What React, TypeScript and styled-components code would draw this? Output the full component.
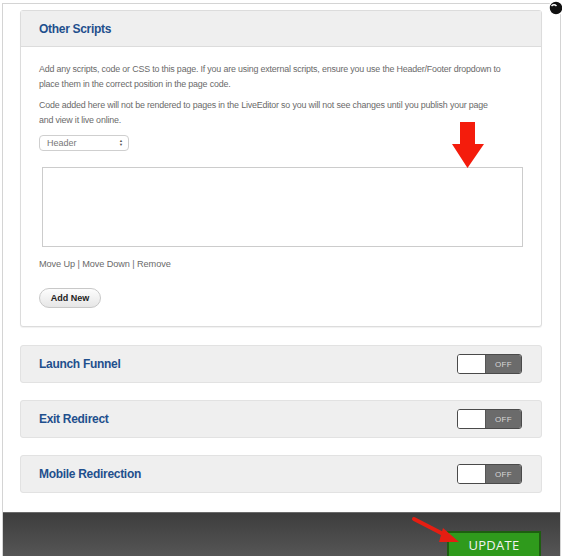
import React from 'react';
import styled, { createGlobalStyle } from 'styled-components';

const GlobalStyle = createGlobalStyle`
  html, body {
    margin: 0;
    padding: 0;
    background: #ffffff;
    font-family: "Liberation Sans", Arial, sans-serif;
  }
`;

const Modal = styled.div`
  position: relative;
  width: 557px;
  height: 553px;
  margin: 3px 0 0 2px;
  border: 1px solid #d4d4d4;
  border-bottom: none;
  background: #ffffff;
  display: flex;
  flex-direction: column;
  overflow: hidden;
`;

const Content = styled.div`
  flex: 1;
  display: flex;
  flex-direction: column;
  padding: 6px 18px 0 17px;
`;

const Panel = styled.div`
  border: 1px solid #dcdcdc;
  border-radius: 3px;
  background: #ffffff;
  box-shadow: 0 1px 1px rgba(0, 0, 0, 0.06);
`;

const PanelHeader = styled.div`
  height: 35px;
  display: flex;
  align-items: center;
  padding-left: 18px;
  background: #efefef;
  border-bottom: 1px solid #dcdcdc;
`;

const Title = styled.h2`
  margin: 0;
  font-size: 12px;
  font-weight: 700;
  color: #1f4f8d;
  letter-spacing: -0.3px;
`;

const PanelBody = styled.div`
  padding: 15px 18px 18px 18px;
`;

const Text = styled.p`
  margin: 0 0 7px 0;
  width: 463px;
  font-size: 8.9px;
  line-height: 14.5px;
  letter-spacing: -0.18px;
  color: #6a6a6a;
`;

const SelectBox = styled.div`
  margin-top: 8px;
  width: 90px;
  height: 16px;
  box-sizing: border-box;
  border: 1px solid #cfcfcf;
  border-radius: 4px;
  display: flex;
  align-items: center;
  justify-content: space-between;
  padding: 0 5px 0 7px;
  font-size: 9px;
  color: #777;
`;

const Caret = styled.span`
  display: flex;
  flex-direction: column;
  font-size: 4px;
  line-height: 4px;
  color: #555;
`;

const CodeArea = styled.div`
  margin: 16px 0 0 3px;
  width: 481px;
  height: 80px;
  box-sizing: border-box;
  border: 1px solid #cccccc;
  background: #ffffff;
`;

const Links = styled.div`
  margin-top: 10px;
  font-size: 9.2px;
  line-height: 14px;
  letter-spacing: -0.1px;
  color: #6a6a6a;
`;

const AddButton = styled.button`
  display: block;
  margin-top: 17px;
  height: 20px;
  width: 62px;
  border: 1px solid #c8c8c8;
  border-radius: 10px;
  background: linear-gradient(#fdfdfd, #e6e6e6);
  font-family: "Liberation Sans", Arial, sans-serif;
  font-size: 9px;
  font-weight: 700;
  color: #222;
  padding: 0;
`;

const ToggleList = styled.div`
  display: flex;
  flex-direction: column;
  gap: 17px;
  margin-top: 18px;
`;

const ToggleRow = styled.div`
  height: 36px;
  border: 1px solid #e2e2e2;
  border-radius: 3px;
  background: #efefef;
  display: flex;
  align-items: center;
  justify-content: space-between;
  padding: 0 19px 0 18px;
`;

const Toggle = styled.div`
  width: 65px;
  height: 20px;
  box-sizing: border-box;
  border: 1px solid #4a4a4a;
  border-radius: 3px;
  display: flex;
  overflow: hidden;
`;

const Knob = styled.div`
  width: 27px;
  background: #ffffff;
  border-right: 1px solid #555;
`;

const OffLabel = styled.div`
  flex: 1;
  background: #6b6b6b;
  color: #d8d8d8;
  font-size: 8px;
  display: flex;
  align-items: center;
  justify-content: center;
  letter-spacing: 0.3px;
`;

const Footer = styled.div`
  height: 45px;
  margin-top: 17px;
  background: linear-gradient(#3d3d3d, #565656);
  border-top: 1px solid #6a6a6a;
  display: flex;
  justify-content: flex-end;
  align-items: flex-start;
  padding: 18px 19px 0 0;
  box-sizing: border-box;
`;

const UpdateButton = styled.button`
  width: 94px;
  height: 32px;
  border: 2px solid #1d5e10;
  background: #2f9a1c;
  color: #f2f2f2;
  font-family: "Open Sans", "Liberation Sans", sans-serif;
  font-size: 13px;
  line-height: 14px;
  padding: 0 0 4px 0;
  letter-spacing: 0.3px;
`;

const Overlay = styled.svg`
  position: absolute;
  pointer-events: none;
`;

const toggles = ['Launch Funnel', 'Exit Redirect', 'Mobile Redirection'];

export default function App() {
  return (
    <>
      <GlobalStyle />
      <Modal>
        <Content>
          <Panel>
            <PanelHeader>
              <Title>Other Scripts</Title>
            </PanelHeader>
            <PanelBody>
              <Text>
                Add any scripts, code or CSS to this page. If you are using external scripts, ensure you use the Header/Footer dropdown
                to place them in the correct position in the page code.
              </Text>
              <Text>
                Code added here will not be rendered to pages in the LiveEditor so you will not see changes until you publish your page
                and view it live online.
              </Text>
              <SelectBox>
                <span>Header</span>
                <Caret>
                  <span>▲</span>
                  <span>▼</span>
                </Caret>
              </SelectBox>
              <CodeArea />
              <Links>Move Up | Move Down | Remove</Links>
              <AddButton>Add New</AddButton>
            </PanelBody>
          </Panel>
          <ToggleList>
            {toggles.map((t) => (
              <ToggleRow key={t}>
                <Title>{t}</Title>
                <Toggle>
                  <Knob />
                  <OffLabel>OFF</OffLabel>
                </Toggle>
              </ToggleRow>
            ))}
          </ToggleList>
        </Content>
        <Footer>
          <UpdateButton>UPDATE</UpdateButton>
        </Footer>
        {/* red marker over the code box */}
        <Overlay style={{ left: 449, top: 118 }} width="34" height="46" viewBox="0 0 34 46">
          <polygon points="8,0 23,0 23,22 32,22 15.5,46 0,22 8,22" fill="#f41c0c" />
        </Overlay>
        {/* red marker pointing at update */}
        <Overlay style={{ left: 406, top: 510 }} width="52" height="32" viewBox="0 0 52 32">
          <line x1="5" y1="5" x2="38" y2="22" stroke="#e51e12" strokeWidth="4" strokeLinecap="round" />
          <polygon points="34,14 50,28 30,28" fill="#e51e12" />
        </Overlay>
      </Modal>
      <Overlay style={{ left: 547, top: 0 }} width="15" height="17" viewBox="0 0 15 17">
        <circle cx="9" cy="8" r="7" fill="#111" stroke="#fff" strokeWidth="1.5" />
        <path d="M4.5 6 Q7 3.5 9.5 6" stroke="#fff" strokeWidth="1.5" fill="none" />
      </Overlay>
    </>
  );
}
